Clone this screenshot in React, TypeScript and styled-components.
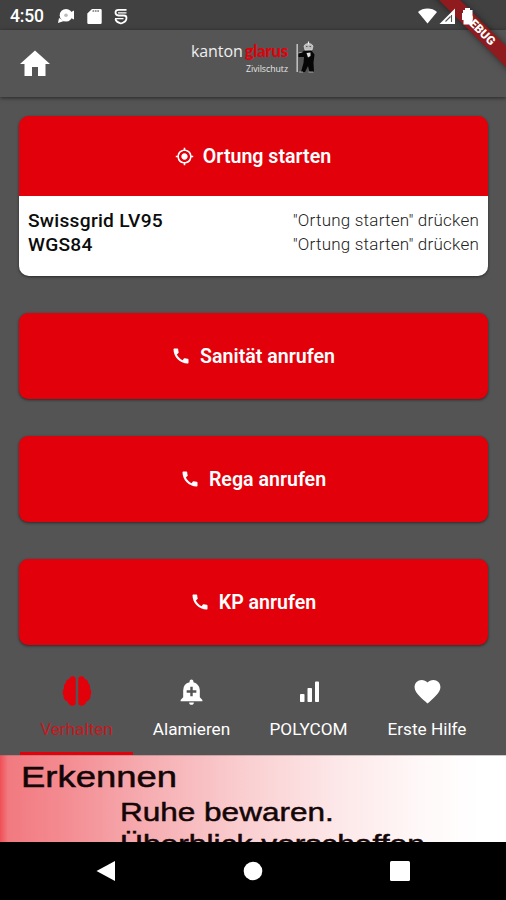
import React from 'react';
import styled, { createGlobalStyle } from 'styled-components';
import { MdAddAlert, MdCall, MdFavorite, MdGpsFixed, MdHome } from 'react-icons/md';

const GlobalStyle = createGlobalStyle`
  *, *::before, *::after { box-sizing: border-box; }
  body { margin: 0; background: #545454; font-family: Roboto, "Liberation Sans", sans-serif; }
  svg { display: block; flex: none; }
`;

const Screen = styled.div`
  position: relative;
  width: 506px;
  height: 900px;
  overflow: hidden;
  display: flex;
  flex-direction: column;
  background: #545454;
`;

const StatusBar = styled.header`
  flex: none;
  height: 30px;
  display: flex;
  align-items: center;
  padding: 2px 28px 0 10px;
  background: #414141;
  color: #fff;
`;

const Clock = styled.span`
  width: 48px;
  font-size: 17.5px;
  font-weight: 500;
  line-height: 20px;
  letter-spacing: -0.2px;
`;

const StatusIcons = styled.div<{ $end?: boolean }>`
  display: flex;
  align-items: center;
  gap: ${p => (p.$end ? 2 : 12)}px;
  margin-left: ${p => (p.$end ? 'auto' : '0')};
  ${p => p.$end && 'position: relative; z-index: 3;'}
`;

const DebugBanner = styled.div`
  position: absolute;
  z-index: 2;
  left: 418px;
  top: 21px;
  width: 120px;
  height: 15px;
  padding-left: 4px;
  transform: rotate(45deg);
  background: #8f1b1e;
  box-shadow: 0 0 7px rgba(0, 0, 0, 0.5);
  color: #fff;
  font-size: 12px;
  font-weight: 900;
  line-height: 15px;
  text-align: center;
`;

const AppBar = styled.div`
  flex: none;
  height: 67px;
  display: flex;
  align-items: center;
  padding: 0 17px;
  background: #555;
  color: #fff;
  box-shadow: 0 1px 4px rgba(0, 0, 0, 0.55);
`;

const Brand = styled.div`
  display: flex;
  margin-left: 138px;
  margin-top: -11px;
  gap: 7px;
`;

const BrandText = styled.div`
  width: 97px;
  display: flex;
  flex-direction: column;
  font-family: "Open Sans", sans-serif;
`;

const BrandName = styled.div`
  display: flex;
  margin-top: -1px;
  font-size: 16px;
  line-height: 22px;
  letter-spacing: -0.1px;
  color: #eee;
`;

const BrandAccent = styled.span`
  margin-left: 2px;
  color: #e2000b;
  font-family: Lato, sans-serif;
  font-size: 16.5px;
  font-weight: 900;
  letter-spacing: -0.2px;
`;

const BrandUnit = styled.div`
  align-self: flex-end;
  font-size: 8.7px;
  line-height: 10px;
  margin-top: 2px;
  color: #e6e6e6;
`;

const Content = styled.main`
  flex: none;
  height: 558px;
  display: flex;
  flex-direction: column;
  gap: 37px;
  padding: 19px 18px 0 19px;
`;

const raised = '0 1px 3px rgba(0, 0, 0, 0.5)';

const LocationCard = styled.section`
  height: 160px;
  border-radius: 10px;
  overflow: hidden;
  background: linear-gradient(#e2000b 80px, #fff 80px);
  box-shadow: ${raised};
`;

const Action = styled.button<{ $height: number; $radius: number }>`
  flex: none;
  width: 100%;
  height: ${p => p.$height}px;
  display: flex;
  align-items: center;
  justify-content: center;
  gap: 9px;
  padding: 0 1px 0 0;
  border: 0;
  border-radius: ${p => p.$radius}px;
  background: #e2000b;
  box-shadow: ${p => (p.$radius ? raised : 'none')};
  color: #fff;
  font-family: inherit;
  font-size: 19.6px;
  font-weight: 600;
`;

const Coordinates = styled.div`
  display: flex;
  flex-direction: column;
  padding: 12px 9px 0;
`;

const CoordinateRow = styled.div`
  height: 24px;
  display: flex;
  align-items: center;
  justify-content: space-between;
`;

const SystemName = styled.span`
  color: #0c0c0c;
  font-size: 19.2px;
  font-weight: 500;
  letter-spacing: 0.25px;
`;

const SystemValue = styled.span`
  color: #222;
  font-size: 17px;
  font-weight: 300;
  letter-spacing: 0.22px;
`;

const Tabs = styled.nav`
  flex: none;
  height: 100px;
  display: grid;
  grid-template-columns: 113px 117px 117px 120px;
  padding-left: 20px;
`;

const Tab = styled.div<{ $active?: boolean }>`
  display: flex;
  flex-direction: column;
  align-items: center;
  padding-top: 19px;
  border-bottom: 3px solid ${p => (p.$active ? '#e2000b' : 'transparent')};
  color: ${p => (p.$active ? '#c5191f' : '#fff')};
`;

const TabIcon = styled.div`
  height: 34px;
  display: flex;
  align-items: center;
`;

const TabLabel = styled.span`
  margin-top: 10px;
  font-size: 17.2px;
  line-height: 22px;
  white-space: nowrap;
`;

const Advice = styled.section`
  flex: none;
  height: 87px;
  overflow: hidden;
  background: linear-gradient(90deg, #ef4f56 0, #f17a80 8px, #f38a90 60px, #f6aeb2 150px, #fad0d2 250px, #fde8e9 340px, #fff8f8 420px, #fff 480px);
  border-top: 1px solid rgba(120, 100, 100, 0.35);
  color: #140607;
  font-family: "Liberation Sans", Arial, sans-serif;
`;

const AdviceLine = styled.div<{ $indent: number; $size: number; $height: number; $stretch: number }>`
  width: max-content;
  margin-left: ${p => p.$indent}px;
  font-size: ${p => p.$size}px;
  line-height: ${p => p.$height}px;
  transform: scaleX(${p => p.$stretch});
  transform-origin: left;
  -webkit-text-stroke: 0.5px #140607;
`;

const NavigationBar = styled.footer`
  flex: none;
  height: 58px;
  display: flex;
  align-items: center;
  justify-content: space-between;
  padding: 0 96px;
  background: #000;
`;

const Bear = () => (
  <svg width="20" height="34" viewBox="0 0 20 34">
    <path d="M2.200 3V31" stroke="#bdbdbd" strokeWidth="1.600" fill="none" />
    <path d="M7 10.500l9-1.500 3.500 4.500-1 8 .5 9.500h-4.500l-1.500-6-3 6H6l2.500-9 .5-6-5.500 0v-3.500z" fill="#060606" />
    <path d="M10 9L9 5q1-2.500 4.500-2.500T18 5l-1 4z" fill="#bbb" stroke="#d8d8d8" strokeWidth="0.800" />
    <path d="M13.500.5v3" stroke="#eee" strokeWidth="1.200" />
    <path d="M11 5.500h1.500M14.500 5.500H16" stroke="#555" strokeWidth="1" />
    <path d="M11.500 12l4-.5v3.500l-2.500 1.500z" fill="#ddd" />
    <path d="M3.500 12l4-1M4 31h4M13.500 31h5" stroke="#bbb" strokeWidth="0.800" />
  </svg>
);

const BrainIcon = () => (
  <svg width="30" height="32" viewBox="0 0 30 32" fill="#e2000b">
    <path d="M13.700 4c0-2-1.500-3-3-2.800C8.700 1.300 7.600 2.500 7.200 4 5 4.200 3.800 6 3.900 8 2 9.300 1.600 11.500 2.200 13.300.5 15 .2 18.500 1.500 20.500c-.2 3 1.500 5.500 4 6 .8 2.500 2.800 4.300 5 4.200 2 0 3.200-1.300 3.200-3z" />
    <path d="M16.300 4c0-2 1.500-3 3-2.800 2 .1 3.100 1.300 3.500 2.800 2.200.2 3.400 2 3.300 4 1.900 1.300 2.300 3.500 1.700 5.300 1.700 1.700 2 5.200.7 7.200.2 3-1.500 5.500-4 6-.8 2.500-2.800 4.300-5 4.200-2 0-3.200-1.300-3.200-3z" />
  </svg>
);

const BarsIcon = () => (
  <svg width="20" height="34" viewBox="0 0 20 34" fill="#fff">
    <rect x="1" y="20" width="4.500" height="8" rx="0.800" />
    <rect x="8.500" y="14" width="4.500" height="14" rx="0.800" />
    <rect x="16" y="7.500" width="4" height="20.500" rx="0.800" />
  </svg>
);

const tabs = [
  { label: 'Verhalten', icon: <BrainIcon />, active: true },
  { label: 'Alamieren', icon: <MdAddAlert size={29} /> },
  { label: 'POLYCOM', icon: <BarsIcon /> },
  { label: 'Erste Hilfe', icon: <MdFavorite size={31} /> },
];

export default function App() {
  return (
    <Screen>
      <GlobalStyle />
      <StatusBar>
        <Clock>4:50</Clock>
        <StatusIcons>
          <svg width="17" height="16" viewBox="0 0 17 16">
            <circle cx="8" cy="7.300" r="6.300" fill="#fff" />
            <path d="M0 15l1-5 5 3zM13 4l3-1.500v9L13 10z" fill="#fff" />
            <circle cx="8" cy="7.300" r="1.800" fill="#bbb" />
          </svg>
          <svg width="15" height="17" viewBox="0 0 15 17">
            <path d="M5 1h8.500a1.200 1.200 0 011.200 1.200v12.600a1.200 1.200 0 01-1.200 1.200h-12A1.200 1.200 0 01.3 14.800V5.500z" fill="#fff" />
            <path d="M5.500 3h7" stroke="#777" strokeWidth="1.300" strokeDasharray="1.700 .7" />
          </svg>
          <svg width="14" height="17" viewBox="0 0 14 17" fill="none" stroke="#fff" strokeWidth="1.800">
            <path d="M12.500 1.800H4.500Q1.500 1.800 1.500 4.500T4.500 7.500h5.500q2.500 0 2.500 2.500c0 3.500-3 4.800-5.500 5.500-2.500-.7-5-1.800-5.500-4.500" />
            <path d="M4 4.800h8.500M1 10.600h8.500" strokeWidth="1.200" />
          </svg>
        </StatusIcons>
        <StatusIcons $end>
          <svg width="19" height="16" viewBox="0 0 19 16">
            <path d="M0 4C5-.6 14-.6 19 4L9.500 15.500z" fill="#fff" />
          </svg>
          <svg width="17" height="17" viewBox="0 0 17 17">
            <path d="M.5 16H16V.5z" fill="#fff" />
            <path d="M12.500 7v7M6.500 13.500l5-5" stroke="#555" strokeWidth="1.100" />
          </svg>
          <svg width="20" height="17" viewBox="0 0 20 17">
            <path d="M7 0h5v2h2.500v11l-1 3.500H5.500V12H4V5h1V2h2z" fill="#fff" />
          </svg>
        </StatusIcons>
      </StatusBar>
      <AppBar>
        <MdHome size={36} />
        <Brand>
          <BrandText>
            <BrandName>
              kanton<BrandAccent>glarus</BrandAccent>
            </BrandName>
            <BrandUnit>Zivilschutz</BrandUnit>
          </BrandText>
          <Bear />
        </Brand>
      </AppBar>
      <Content>
        <LocationCard>
          <Action $height={80} $radius={0}>
            <MdGpsFixed size={19} />
            Ortung starten
          </Action>
          <Coordinates>
            {['Swissgrid LV95', 'WGS84'].map(name => (
              <CoordinateRow key={name}>
                <SystemName>{name}</SystemName>
                <SystemValue>"Ortung starten" drücken</SystemValue>
              </CoordinateRow>
            ))}
          </Coordinates>
        </LocationCard>
        {['Sanität anrufen', 'Rega anrufen', 'KP anrufen'].map(label => (
          <Action key={label} $height={86} $radius={9}>
            <MdCall size={20} />
            {label}
          </Action>
        ))}
      </Content>
      <Tabs>
        {tabs.map(tab => (
          <Tab key={tab.label} $active={tab.active}>
            <TabIcon>{tab.icon}</TabIcon>
            <TabLabel>{tab.label}</TabLabel>
          </Tab>
        ))}
      </Tabs>
      <Advice>
        <AdviceLine $indent={21} $size={30} $height={42} $stretch={1.215}>Erkennen</AdviceLine>
        <AdviceLine $indent={120} $size={26} $height={28} $stretch={1.212}>Ruhe bewaren.</AdviceLine>
        <AdviceLine $indent={120} $size={26} $height={36} $stretch={1.222}>Überblick verschaffen</AdviceLine>
      </Advice>
      <NavigationBar>
        <svg width="20" height="24" viewBox="0 0 20 24">
          <path d="M19 2v20L.5 12z" fill="#fff" />
        </svg>
        <svg width="20" height="20" viewBox="0 0 20 20">
          <circle cx="10" cy="10" r="9.300" fill="#fff" />
        </svg>
        <svg width="20" height="20" viewBox="0 0 20 20">
          <rect width="20" height="20" rx="1.500" fill="#fff" />
        </svg>
      </NavigationBar>
      <DebugBanner>DEBUG</DebugBanner>
    </Screen>
  );
}
